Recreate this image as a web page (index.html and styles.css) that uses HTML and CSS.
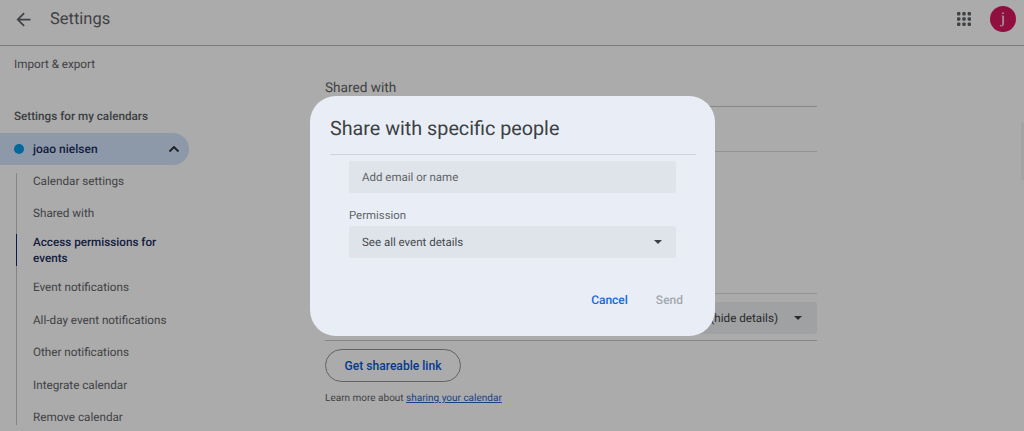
FILE: index.html
```html
<!DOCTYPE html>
<html lang="en">

<head>
    <meta charset="UTF-8">
    <title>Settings</title>
    <link rel="stylesheet" href="styles.css">
</head>

<body>
    <header class="top-bar">
        <svg class="back-icon" width="21" height="21" viewBox="0 0 24 24">
            <path d="M20 11H7.83l5.59-5.59L12 4l-8 8 8 8 1.41-1.41L7.83 13H20v-2z"></path>
        </svg>
        <div class="top-title">Settings</div>
        <svg class="apps-icon" width="16" height="16" viewBox="0 0 16 16">
            <rect x="1" y="1" width="3.4" height="3.4" rx="1"></rect>
            <rect x="6.3" y="1" width="3.4" height="3.4" rx="1"></rect>
            <rect x="11.6" y="1" width="3.4" height="3.4" rx="1"></rect>
            <rect x="1" y="6.3" width="3.4" height="3.4" rx="1"></rect>
            <rect x="6.3" y="6.3" width="3.4" height="3.4" rx="1"></rect>
            <rect x="11.6" y="6.3" width="3.4" height="3.4" rx="1"></rect>
            <rect x="1" y="11.6" width="3.4" height="3.4" rx="1"></rect>
            <rect x="6.3" y="11.6" width="3.4" height="3.4" rx="1"></rect>
            <rect x="11.6" y="11.6" width="3.4" height="3.4" rx="1"></rect>
        </svg>
        <div class="avatar">j</div>
    </header>

    <div class="page">
        <aside class="sidebar">
            <div class="side-link">Import &amp; export</div>
            <div class="side-heading">Settings for my calendars</div>
            <div class="calendar-pill">
                <span class="calendar-dot"></span>
                <span class="calendar-name">joao nielsen</span>
                <svg class="chevron" width="12" height="8" viewBox="0 0 12 8">
                    <path d="M1.5 6.5 6 2l4.5 4.5" fill="none" stroke="#2b2d30" stroke-width="1.8"></path>
                </svg>
            </div>
            <nav class="side-nav">
                <a class="nav-item">Calendar settings</a>
                <a class="nav-item">Shared with</a>
                <a class="nav-item active">Access permissions for events</a>
                <a class="nav-item">Event notifications</a>
                <a class="nav-item">All-day event notifications</a>
                <a class="nav-item">Other notifications</a>
                <a class="nav-item">Integrate calendar</a>
                <a class="nav-item">Remove calendar</a>
            </nav>
        </aside>

        <main class="content">
            <div class="section-title">Shared with</div>
            <div class="rule-block"></div>
            <div class="access-block">
                <div class="access-select">
                    <span>See all event details (hide details)</span>
                    <span class="caret"></span>
                </div>
            </div>
            <button class="share-button">Get shareable link</button>
            <div class="learn-more">Learn more about <a class="learn-link">sharing your calendar</a></div>
        </main>
    </div>

    <div class="scroll-thumb"></div>
    <div class="scrim"></div>

    <div class="dialog">
        <div class="dialog-title">Share with specific people</div>
        <div class="dialog-body">
            <div class="field">Add email or name</div>
            <div class="field-label">Permission</div>
            <div class="field field-select">
                <span>See all event details</span>
                <span class="caret"></span>
            </div>
        </div>
        <div class="dialog-actions">
            <a class="action-cancel">Cancel</a>
            <a class="action-send">Send</a>
        </div>
    </div>
</body>

</html>
```

FILE: styles.css
```css
html,
body {
    height: 100%;
}

body {
    margin: 0;
    background: #ffffff;
    font-family: Roboto, "Liberation Sans", sans-serif;
    color: #5f6368;
    overflow: hidden;
    text-rendering: geometricPrecision;
}

/* top bar */
.top-bar {
    display: flex;
    align-items: center;
    box-sizing: border-box;
    height: 46px;
    border-bottom: 1px solid #b5b8bc;
    padding: 0 8px 7px 13px;
}

.back-icon {
    fill: #5f6368;
    flex: none;
}

.top-title {
    margin-left: 16px;
    font-size: 16.5px;
    color: #5f6368;
    flex: 1;
}

.apps-icon {
    fill: #5f6368;
    margin-right: 18px;
}

.avatar {
    width: 26px;
    height: 26px;
    border-radius: 50%;
    background: #d8175e;
    color: #ffffff;
    font-family: "Liberation Serif", serif;
    font-size: 16px;
    line-height: 25px;
    text-align: center;
}

/* sidebar */
.page {
    display: flex;
}

.sidebar {
    width: 189px;
    flex: none;
    font-size: 11.7px;
}

.side-link {
    padding: 11px 0 0 14px;
    line-height: 15px;
}

.side-heading {
    padding: 37px 0 0 14px;
    line-height: 15px;
    font-weight: 500;
    color: #5a5e63;
}

.calendar-pill {
    display: flex;
    align-items: center;
    height: 32px;
    margin-top: 9px;
    padding: 0 9px 0 14px;
    background: #d3e3fd;
    border-radius: 0 16px 16px 0;
}

.calendar-dot {
    width: 10px;
    height: 10px;
    border-radius: 50%;
    background: #039be5;
    margin-right: 9px;
}

.calendar-name {
    flex: 1;
    font-size: 12px;
    font-weight: 500;
    color: #1c2f5c;
}

.side-nav {
    display: flex;
    flex-direction: column;
    margin: 8px 0 0 16px;
    border-left: 1.5px solid #c4c7c9;
}

.nav-item {
    padding: 8.5px 10px 8.5px 16px;
    line-height: 15.4px;
}

.nav-item:first-child {
    padding-top: 1px;
}

.nav-item:last-child {
    padding-bottom: 0;
}

.nav-item.active {
    margin: 4px 0 5.5px -1.5px;
    padding: 0 10px 0 16.5px;
    line-height: 16px;
    border-left: 1.5px solid #0b2a78;
    font-weight: 500;
    color: #1c2f5c;
}

/* settings content */
.content {
    width: 492px;
    margin-left: 136px;
    font-size: 11.7px;
}

.section-title {
    padding-top: 34px;
    height: 26px;
    font-size: 13.6px;
    line-height: 17px;
    border-bottom: 1px solid #c7c9cc;
}

.rule-block {
    height: 44px;
    border-bottom: 1px solid #dadce0;
}

.access-block {
    margin-top: 141px;
    padding: 8px 0 6px;
    border-top: 1px solid #dadce0;
    border-bottom: 1px solid #c7c9cc;
}

.access-select {
    display: flex;
    justify-content: flex-end;
    align-items: center;
    gap: 16px;
    height: 32px;
    padding-right: 15px;
    background: #eef0f3;
    border-radius: 2px;
    color: #3c4043;
}

.caret {
    width: 0;
    height: 0;
    border-left: 4.5px solid transparent;
    border-right: 4.5px solid transparent;
    border-top: 4.5px solid #3c4043;
}

.share-button {
    display: block;
    width: 136px;
    height: 33px;
    margin-top: 8px;
    background: transparent;
    border: 1px solid #8f9296;
    border-radius: 17px;
    font-family: inherit;
    font-size: 12.1px;
    font-weight: 500;
    color: #0b57d0;
}

.learn-more {
    margin-top: 10px;
    font-size: 10px;
    line-height: 14px;
}

.learn-link {
    color: #2a62c4;
    text-decoration: underline;
}

.scroll-thumb {
    position: absolute;
    top: 122px;
    right: 0;
    width: 3px;
    height: 58px;
    background: #f4f4f4;
}

.scrim {
    position: absolute;
    inset: 0;
    background: rgba(0, 0, 0, 0.33);
}

/* dialog */
.dialog {
    position: absolute;
    top: 96px;
    left: 310px;
    width: 405px;
    height: 240px;
    box-sizing: border-box;
    padding: 0 19px 0 20px;
    background: #e9eef6;
    border-radius: 26px;
}

.dialog-title {
    height: 58px;
    font-size: 19.75px;
    line-height: 66px;
    color: #3c4043;
    border-bottom: 1px solid #cfd3da;
}

.dialog-body {
    padding: 6px 20px 0 19px;
}

.field {
    display: flex;
    justify-content: space-between;
    align-items: center;
    height: 32px;
    padding: 0 14px 0 13px;
    background: #dfe4ea;
    border-radius: 2px;
    font-size: 11.5px;
    color: #5f6368;
}

.field-label {
    margin-top: 15px;
    margin-bottom: 4px;
    font-size: 11.4px;
    line-height: 14px;
    color: #5f6368;
}

.field-select {
    color: #46494d;
}

.dialog-actions {
    display: flex;
    justify-content: flex-end;
    gap: 28px;
    margin-top: 35px;
    padding-right: 13px;
    font-size: 12px;
    font-weight: 500;
    line-height: 15px;
}

.action-cancel {
    color: #1a66d8;
}

.action-send {
    color: #a4a8ae;
}
```
